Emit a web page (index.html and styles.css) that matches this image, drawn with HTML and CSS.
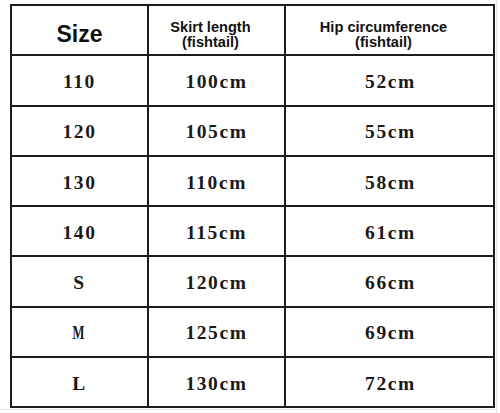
FILE: index.html
```html
<!DOCTYPE html>
<html>
<head>
<meta charset="utf-8">
<link rel="stylesheet" href="styles.css">
</head>
<body>
<div class="sheet">
  <div class="chart">
    <div class="cell head size">Size</div>
    <div class="cell head sub">Skirt length<br>(fishtail)</div>
    <div class="cell head sub">Hip circumference<br>(fishtail)</div>

    <div class="cell">110</div><div class="cell">100cm</div><div class="cell wide">52cm</div>
    <div class="cell">120</div><div class="cell">105cm</div><div class="cell wide">55cm</div>
    <div class="cell">130</div><div class="cell">110cm</div><div class="cell wide">58cm</div>
    <div class="cell">140</div><div class="cell">115cm</div><div class="cell wide">61cm</div>
    <div class="cell">S</div><div class="cell">120cm</div><div class="cell wide">66cm</div>
    <div class="cell"><span class="narrow">M</span></div><div class="cell">125cm</div><div class="cell wide">69cm</div>
    <div class="cell">L</div><div class="cell">130cm</div><div class="cell wide">72cm</div>
  </div>
</div>
</body>
</html>
```

FILE: styles.css
```css
html, body {
  margin: 0;
  padding: 0;
  background: #fff;
}

.sheet {
  width: 500px;
  height: 413px;
  box-sizing: border-box;
  padding: 4px 0 0 9px;
  border-left: 1px solid #e4e4e4;
  background:
    linear-gradient(#e6e6e6, #e6e6e6) 0 409px / 100% 1px no-repeat,
    linear-gradient(#e6e6e6, #e6e6e6) 496px 0 / 1px 100% no-repeat,
    #fff;
  margin-left: -1px;
  padding-left: 10px;
}

.chart {
  display: grid;
  grid-template-columns: 135px 135px 207px;
  grid-auto-rows: 48.3px;
  gap: 2px;
  padding: 2px;
  width: 485px;
  box-sizing: border-box;
  background: #1c1c1c;
}

.cell {
  background: #fff;
  display: flex;
  align-items: center;
  justify-content: center;
  font-family: "Liberation Serif", "Times New Roman", serif;
  font-weight: bold;
  font-size: 19.5px;
  letter-spacing: 1.6px;
  color: #1a1a1a;
  padding-top: 3px;
  box-sizing: border-box;
}

.cell.wide {
  padding-left: 2px;
}

.narrow {
  display: inline-block;
  transform: scaleX(0.65);
}

.head {
  font-family: "Liberation Sans", Arial, sans-serif;
  letter-spacing: 0;
  color: #111;
}

.size {
  font-size: 23px;
  padding-top: 8px;
  padding-left: 0;
}

.sub {
  font-size: 14.6px;
  line-height: 14.5px;
  text-align: center;
  padding-top: 9px;
  padding-right: 12px;
}
```
